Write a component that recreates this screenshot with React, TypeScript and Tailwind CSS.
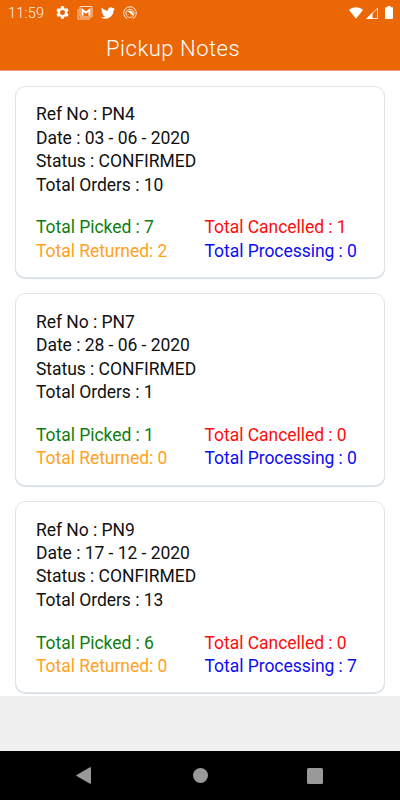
import React from 'react';

type Note = {
  refNo: string;
  date: string;
  status: string;
  orders: number;
  picked: number;
  cancelled: number;
  returned: number;
  processing: number;
};

const notes: Note[] = [
  { refNo: 'PN4', date: '03 - 06 - 2020', status: 'CONFIRMED', orders: 10, picked: 7, cancelled: 1, returned: 2, processing: 0 },
  { refNo: 'PN7', date: '28 - 06 - 2020', status: 'CONFIRMED', orders: 1, picked: 1, cancelled: 0, returned: 0, processing: 0 },
  { refNo: 'PN9', date: '17 - 12 - 2020', status: 'CONFIRMED', orders: 13, picked: 6, cancelled: 0, returned: 0, processing: 7 },
];

function StatusBar() {
  return (
    <div className="flex h-[25px] items-center pl-2 pr-[7px] text-[#fff0e8]">
      <span className="w-[47px] whitespace-nowrap pt-[3px] text-[14.5px] font-light leading-none tracking-[0.2px]">11:59</span>
      {/* Settings */}
      <svg className="h-[15px] w-[15px]" viewBox="0 0 24 24" fill="#fff">
        <path d="M19.43 12.98c.04-.32.07-.64.07-.98s-.03-.66-.07-.98l2.11-1.65c.19-.15.24-.42.12-.64l-2-3.46c-.12-.22-.39-.3-.61-.22l-2.49 1c-.52-.4-1.08-.73-1.69-.98l-.38-2.65A.49.49 0 0 0 14 2h-4c-.25 0-.46.18-.49.42l-.38 2.65c-.61.25-1.17.59-1.69.98l-2.49-1c-.23-.09-.49 0-.61.22l-2 3.46c-.13.22-.07.49.12.64l2.11 1.65c-.04.32-.07.65-.07.98s.03.66.07.98l-2.11 1.65c-.19.15-.24.42-.12.64l2 3.46c.12.22.39.3.61.22l2.49-1c.52.4 1.08.73 1.69.98l.38 2.65c.03.24.24.42.49.42h4c.25 0 .46-.18.49-.42l.38-2.65c.61-.25 1.17-.59 1.69-.98l2.49 1c.23.09.49 0 .61-.22l2-3.46c.12-.22.07-.49-.12-.64zM12 16a4 4 0 1 1 0-8 4 4 0 0 1 0 8z" />
      </svg>
      {/* Mail */}
      <svg className="ml-[7px] h-[14px] w-4" viewBox="0 0 16 14" fill="none">
        <path d="M1 3v10h12" stroke="#fff" strokeWidth="1" opacity=".7" />
        <rect x="3" y=".5" width="12" height="10.500" rx=".8" stroke="#fff" strokeWidth="1" opacity=".8" />
        <path d="M4.500 9.700V2L9 5.200 13.500 2v7.700h-2V6L9 7.800 6.500 6v3.700z" fill="#fff" />
      </svg>
      {/* Twitter */}
      <svg className="ml-[8px] h-[14px] w-[14px]" viewBox="0 0 24 24" fill="#fff">
        <path d="M23.953 4.57a10 10 0 0 1-2.825.775 4.958 4.958 0 0 0 2.163-2.723 10.100 10.100 0 0 1-3.127 1.184 4.920 4.920 0 0 0-8.384 4.482C7.690 8.095 4.067 6.130 1.640 3.162a4.822 4.822 0 0 0-.666 2.475c0 1.710.870 3.213 2.188 4.096a4.904 4.904 0 0 1-2.228-.616v.060a4.923 4.923 0 0 0 3.946 4.827 4.996 4.996 0 0 1-2.212.085 4.936 4.936 0 0 0 4.604 3.417 9.867 9.867 0 0 1-6.102 2.105c-.39 0-.779-.023-1.170-.067a13.995 13.995 0 0 0 7.557 2.209c9.053 0 13.998-7.496 13.998-13.985 0-.21 0-.42-.015-.63A9.935 9.935 0 0 0 24 4.590z" />
      </svg>
      <svg className="ml-[8px] h-[14px] w-[14px]" viewBox="0 0 14 14" fill="none" stroke="#fff">
        <path d="M4.200 12.700A6.300 6.300 0 1 1 9.800 12.700" strokeWidth="1" opacity=".9" />
        <path d="M3.800 9.700A4 4 0 1 1 10.200 9.700" strokeWidth="1" opacity=".85" />
        <path d="M4.500 5l5.700 5V7L8 4.800z" fill="#fff" stroke="none" />
        <path d="M4 10.500c1.700 1.300 4.300 1.300 6 0" strokeWidth="1" opacity=".75" />
      </svg>

      <div className="ml-auto flex items-center">
        <svg className="h-[12px] w-[14px]" viewBox="0 0 14 12" fill="#fff">
          <path d="M0 3.100C4-.7 10-.7 14 3.100L7 11.800z" />
        </svg>
        <svg className="ml-[3px] h-[12px] w-[12px]" viewBox="0 0 12 12">
          <path d="M1.200 11.500L11.500 1.200v10.300z" fill="none" stroke="#fff" strokeWidth="1" opacity=".8" />
          <path d="M0 12L6.500 5.500V12z" fill="#fff" />
        </svg>
        <svg className="ml-[7px] h-[13px] w-[8px]" viewBox="0 0 8 13" fill="#fff">
          <path d="M2.500 0h3v1.300h1.700c.5 0 .8.300.8.800v10.100c0 .5-.3.800-.8.800H.8c-.5 0-.8-.3-.8-.8V2.100c0-.5.3-.8.8-.8h1.700z" />
        </svg>
      </div>
    </div>
  );
}

function NoteCard({ note }: { note: Note }) {
  return (
    <div className="h-[192.600px] shrink-0 rounded-[10.500px] border border-[#dfe4ea] bg-white px-5 pt-[16.900px] shadow-[0_1px_1px_#d8dde3]">
      <p>Ref No : {note.refNo}</p>
      <p>Date : {note.date}</p>
      <p>Status : {note.status}</p>
      <p>Total Orders : {note.orders}</p>
      <div className="mt-[19.400px] grid grid-cols-[168.500px_1fr] whitespace-nowrap">
        <p className="text-[#0f7d0f]">Total Picked : {note.picked}</p>
        <p className="text-[#ff0c0c]">Total Cancelled : {note.cancelled}</p>
        <p className="text-[#ffa21c]">Total Returned: {note.returned}</p>
        <p className="text-[#0c0cf5]">Total Processing : {note.processing}</p>
      </div>
    </div>
  );
}

export default function App() {
  return (
    <div className="flex h-[800px] w-[400px] flex-col overflow-hidden bg-[#f0f0f0] font-[Roboto,sans-serif]">
      <header className="h-[71px] shrink-0 border-b border-[#ef9886] bg-[#eb6604]">
        <StatusBar />
        <h1 className="ml-[106px] mt-[10px] text-[22px] font-light leading-7 tracking-[0.53px] text-white">Pickup Notes</h1>
      </header>

      <main className="flex h-[625px] shrink-0 flex-col gap-[15px] bg-white px-[15px] pt-[14.500px] text-[17.500px] leading-[23.400px] tracking-[-0.04px] text-[#111]">
        {notes.map((note) => (
          <NoteCard key={note.refNo} note={note} />
        ))}
      </main>

      <nav className="mt-auto flex h-[49px] items-center justify-between bg-black pl-[76px] pr-[77px] text-[#999]">
        <svg className="h-[17px] w-[15px]" viewBox="0 0 15 17" fill="currentColor">
          <path d="M.6 7.900L14 .3q1-.4 1 .6v15.200q0 1-1 .6L.6 9.100q-.8-.6 0-1.200z" />
        </svg>
        <div className="ml-[2px] size-[15px] rounded-full bg-[#999]" />
        <div className="size-4 rounded-[1.500px] bg-[#999]" />
      </nav>
    </div>
  );
}
